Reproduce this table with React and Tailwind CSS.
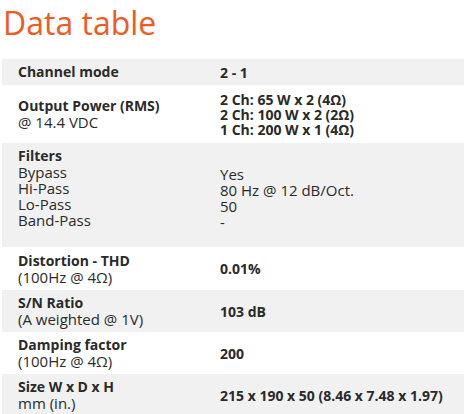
import React from 'react';

const rows = [
    { label: 'Channel mode', sub: [], value: ['2 - 1'], bold: true, h: 'h-[26px]' },
    { label: 'Output Power (RMS)', sub: ['@ 14.4 VDC'], value: ['2 Ch: 65 W x 2 (4Ω)', '2 Ch: 100 W x 2 (2Ω)', '1 Ch: 200 W x 1 (4Ω)'], bold: true, h: 'h-[58px]' },
    { label: 'Filters', sub: ['Bypass', 'Hi-Pass', 'Lo-Pass', 'Band-Pass'], value: ['', 'Yes', '80 Hz @ 12 dB/Oct.', '50', '-'], bold: false, h: 'h-[104px]', top: true },
    { label: 'Distortion - THD', sub: ['(100Hz @ 4Ω)'], value: ['0.01%'], bold: true, h: 'h-[43px]' },
    { label: 'S/N Ratio', sub: ['(A weighted @ 1V)'], value: ['103 dB'], bold: true, h: 'h-[42px]' },
    { label: 'Damping factor', sub: ['(100Hz @ 4Ω)'], value: ['200'], bold: true, h: 'h-[42px]' },
    { label: 'Size W x D x H', sub: ['mm (in.)'], value: ['215 x 190 x 50 (8.46 x 7.48 x 1.97)'], bold: true, h: 'h-[42px]' },
];

const App = () => {
    return (
        <div className="w-[464px] h-[414px] overflow-hidden bg-white text-[#2a2a2a] font-['Open_Sans',sans-serif]">
            <h1 className="pl-[3px] pt-[2px] h-[59px] text-[32px] leading-[42px] text-[#f15a22]">Data table</h1>

            <div className="ml-[2px]">
                {rows.map((row, i) => (
                    <div
                        key={row.label}
                        className={`flex ${row.h} ${row.top ? 'items-start pt-[5px]' : 'items-center'} ${i % 2 === 0 ? 'bg-[#f1f1f1]' : 'bg-white'}`}
                    >
                        <div className="w-[218px] pl-[16px]">
                            <div className="font-bold text-[14px] leading-[16px]">{row.label}</div>
                            {row.sub.map(s => <div key={s} className="text-[15px] leading-[16px]">{s}</div>)}
                        </div>
                        <div className={`${row.top ? 'text-[15px] leading-[16px] pt-[2px]' : 'text-[14px] leading-[15px]'} ${row.bold ? 'font-bold' : ''}`}>
                            {row.value.map((v, j) => <div key={j}>{v || '\u00a0'}</div>)}
                        </div>
                    </div>
                ))}
            </div>
        </div>
    );
};

export default App;
